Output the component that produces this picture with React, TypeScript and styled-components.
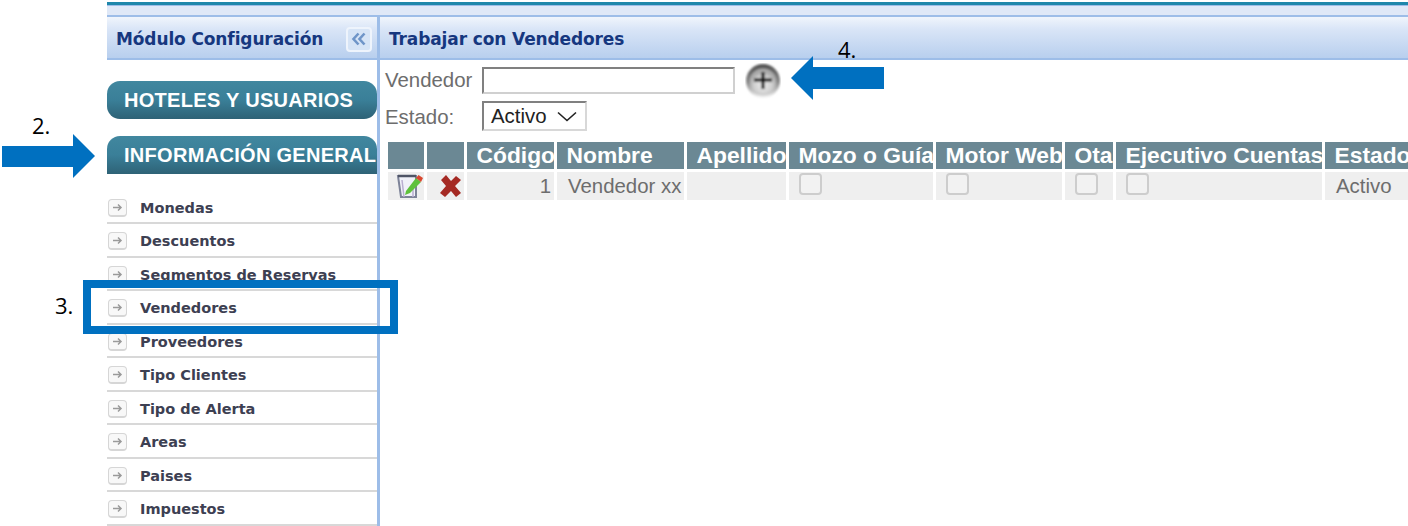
import styled, { createGlobalStyle } from 'styled-components'

const GlobalStyle = createGlobalStyle`
  html, body {
    margin: 0;
    padding: 0;
    background: #fff;
  }
`;

const Page = styled.div`
  position: relative;
  width: 1408px;
  height: 526px;
  overflow: hidden;
  background: #fff;
  padding: 2px 0 0 107px;
  box-sizing: border-box;
  font-family: "Liberation Sans", Arial, sans-serif;
`;

const TopStrip = styled.div`
  height: 13px;
  box-sizing: border-box;
  background: #dfe8f7;
  border-top: 3px solid #1f87ab;
  box-shadow: inset 0 1px 0 #9dbde8;
`;

const Columns = styled.div`
  display: flex;
  border-top: 2px solid #9dbde8;
  height: 509px;
`;

const Sidebar = styled.aside`
  width: 273px;
  flex: none;
  box-sizing: border-box;
  border-right: 3px solid #9dbde8;
`;

const Main = styled.main`
  flex: 1;
  min-width: 0;
`;

const PanelHeader = styled.div`
  height: 43px;
  box-sizing: border-box;
  display: flex;
  align-items: center;
  justify-content: space-between;
  padding: 3px 5px 0 ${p => p.$left}px;
  background: linear-gradient(#f0f5fc, #d9e5f7 30%, #b8cfee);
  border-bottom: 2px solid #9dbde8;
`;

const PanelTitle = styled.h1`
  margin: 0;
  font-family: "DejaVu Sans", Verdana, sans-serif;
  font-size: 17px;
  font-weight: 700;
  letter-spacing: -0.12px;
  color: #16377f;
  white-space: nowrap;
`;

const CollapseButton = styled.div`
  width: 26px;
  height: 25px;
  box-sizing: border-box;
  display: flex;
  align-items: center;
  justify-content: center;
  border: 2px solid #eef4fc;
  border-radius: 4px;
  background: #d6e4f6;
`;

const SectionButton = styled.div`
  height: 38px;
  box-sizing: border-box;
  padding-left: 17px;
  margin-top: ${p => p.$top}px;
  display: flex;
  align-items: center;
  overflow: hidden;
  white-space: nowrap;
  color: #fff;
  font-size: 20px;
  font-weight: 700;
  letter-spacing: 0.3px;
  background: linear-gradient(#41879f, #3a7f98 50%, #2e6276);
  border-radius: ${p => (p.$open ? '13px 13px 0 0' : '13px')};
`;

const Menu = styled.ul`
  list-style: none;
  margin: 16.5px 0 0;
  padding: 0;
`;

const MenuItem = styled.li`
  height: 33.5px;
  box-sizing: border-box;
  display: flex;
  align-items: center;
  gap: 13px;
  padding: 3px 0 0 1px;
  border-bottom: 2px solid #d8d8d8;
  font-family: "DejaVu Sans", Verdana, sans-serif;
  font-size: 14.5px;
  font-weight: 700;
  color: #3d4052;
`;

const ArrowBox = styled.span`
  width: 19px;
  height: 18px;
  box-sizing: border-box;
  flex: none;
  display: flex;
  align-items: center;
  justify-content: center;
  border: 1.5px solid #d6d6d6;
  border-bottom-width: 2px;
  border-radius: 4px;
  background: #f8f8f8;
`;

const FormRow = styled.div`
  display: flex;
  align-items: center;
  height: ${p => p.$height}px;
  padding-left: 5px;
`;

const FieldLabel = styled.label`
  width: 97px;
  flex: none;
  font-size: 20.4px;
  color: #6d6d6d;
  padding-top: ${p => p.$drop || 0}px;
`;

const TextBox = styled.div`
  width: 253px;
  height: 27px;
  box-sizing: border-box;
  border: 2px solid;
  border-color: #808080 #d0d0d0 #d0d0d0 #808080;
  background: #fff;
`;

const AddButton = styled.div`
  width: 36px;
  height: 36px;
  margin-left: 10px;
  flex: none;
`;

const SelectBox = styled.div`
  width: 105px;
  height: 30px;
  box-sizing: border-box;
  padding: 1px 8px 0 7px;
  display: flex;
  align-items: center;
  justify-content: space-between;
  border: 2px solid;
  border-color: #808080 #d8d8d8 #d8d8d8 #808080;
  font-size: 20.4px;
  color: #222;
`;

const Grid = styled.table`
  table-layout: fixed;
  width: 1023px;
  margin: 11px 0 0 8px;
  border-collapse: separate;
  border-spacing: 0;
`;

const Col = styled.col`
  width: ${p => p.$w + p.$gap}px;
`;

const HeadCell = styled.th`
  height: 27px;
  padding: 0 0 0 9.5px;
  box-sizing: border-box;
  border-right: 3px solid #fff;
  background: #6b8894;
  background-clip: padding-box;
  color: #fff;
  font-size: 22.8px;
  font-weight: 700;
  text-align: left;
  white-space: nowrap;
  overflow: hidden;
`;

const BodyCell = styled.td`
  height: 31px;
  padding: 3px ${p => (p.$right ? '3px' : '0')} 0 ${p => (p.$right ? '0' : '11px')};
  box-sizing: border-box;
  border-right: 3px solid #fff;
  background: #efefef;
  background-clip: padding-box;
  font-size: 20.4px;
  color: #6d6d6d;
  text-align: ${p => (p.$right ? 'right' : 'left')};
  white-space: nowrap;
  overflow: hidden;
  position: relative;
  &::before {
    content: '';
    position: absolute;
    left: 0;
    right: 0;
    top: 0;
    height: 3px;
    background: #fff;
  }
`;

const IconCell = styled(BodyCell)`
  padding: 3px 0 0 ${p => p.$indent}px;
  text-align: left;
  line-height: 0;
`;

const CheckCell = styled(BodyCell)`
  padding: 0 0 2px 10px;
  vertical-align: middle;
`;

const CheckBox = styled.span`
  display: block;
  width: 23px;
  height: 22px;
  box-sizing: border-box;
  border: 2px solid #cdcdcd;
  border-radius: 4px;
  background: #f2f2f2;
`;

const StepNumber = styled.span`
  position: absolute;
  left: ${p => p.$x}px;
  top: ${p => p.$y}px;
  font-family: "Open Sans", "Noto Sans", sans-serif;
  font-size: 22px;
  line-height: 22px;
  color: #000;
`;

const Callout = styled.svg`
  position: absolute;
  left: ${p => p.$x}px;
  top: ${p => p.$y}px;
`;

const Highlight = styled.div`
  position: absolute;
  left: 83px;
  top: 280px;
  width: 315px;
  height: 54px;
  box-sizing: border-box;
  border: 8px solid #0070c0;
`;

const menuItems = [
  'Monedas',
  'Descuentos',
  'Segmentos de Reservas',
  'Vendedores',
  'Proveedores',
  'Tipo Clientes',
  'Tipo de Alerta',
  'Areas',
  'Paises',
  'Impuestos',
]

const columns = [
  { w: 36, label: '' },
  { w: 37, label: '' },
  { w: 87, label: 'Código' },
  { w: 127, label: 'Nombre' },
  { w: 99, label: 'Apellido' },
  { w: 144, label: 'Mozo o Guía' },
  { w: 126, label: 'Motor Web' },
  { w: 48, label: 'Ota' },
  { w: 206, label: 'Ejecutivo Cuentas' },
  { w: 83, label: 'Estado' },
]

function App() {
  return (
    <Page>
      <GlobalStyle />
      <TopStrip />
      <Columns>
        <Sidebar>
          <PanelHeader $left={9}>
            <PanelTitle>Módulo Configuración</PanelTitle>
            <CollapseButton>
              <svg width="16" height="14" viewBox="0 0 16 14" fill="none" stroke="#6f95c8" strokeWidth="2.6">
                <path d="M7.500 1.500 2.500 7l5 5.500M13.500 1.500 8.500 7l5 5.500" />
              </svg>
            </CollapseButton>
          </PanelHeader>
          <SectionButton $top={21}>HOTELES Y USUARIOS</SectionButton>
          <SectionButton $top={17} $open>INFORMACIÓN GENERAL</SectionButton>
          <Menu>
            {menuItems.map(item => (
              <MenuItem key={item}>
                <ArrowBox>
                  <svg width="11" height="9" viewBox="0 0 11 9" fill="none" stroke="#9a9a9a" strokeWidth="1.5">
                    <path d="M1 4.500h8M6 1.500l3 3-3 3" />
                  </svg>
                </ArrowBox>
                {item}
              </MenuItem>
            ))}
          </Menu>
        </Sidebar>
        <Main>
          <PanelHeader $left={9}>
            <PanelTitle>Trabajar con Vendedores</PanelTitle>
          </PanelHeader>
          <FormRow $height={41}>
            <FieldLabel>Vendedor</FieldLabel>
            <TextBox />
            <AddButton>
              <svg width="36" height="36" viewBox="0 0 36 36">
                <defs>
                  <linearGradient id="addRim" x1="0" y1="0" x2="0" y2="1">
                    <stop offset="0%" stopColor="#505050" />
                    <stop offset="55%" stopColor="#8a8a8a" />
                    <stop offset="100%" stopColor="#fafafa" />
                  </linearGradient>
                  <radialGradient id="addFill" cx="50%" cy="62%" r="50%">
                    <stop offset="0%" stopColor="#eeeeee" />
                    <stop offset="70%" stopColor="#cdcdcd" />
                    <stop offset="100%" stopColor="#a8a8a8" />
                  </radialGradient>
                  <filter id="addSoft">
                    <feGaussianBlur stdDeviation="1" />
                  </filter>
                </defs>
                <g filter="url(#addSoft)">
                  <circle cx="18" cy="18" r="17" fill="url(#addRim)" />
                  <circle cx="18" cy="19" r="13.500" fill="url(#addFill)" />
                  <path d="M18 9v17M9 17h18" stroke="#111" strokeWidth="3" />
                </g>
              </svg>
            </AddButton>
          </FormRow>
          <FormRow $height={30}>
            <FieldLabel $drop={2}>Estado:</FieldLabel>
            <SelectBox>
              Activo
              <svg width="20" height="11" viewBox="0 0 20 11" fill="none" stroke="#222" strokeWidth="1.6">
                <path d="M1 1.500 10 9.500 19 1.500" />
              </svg>
            </SelectBox>
          </FormRow>
          <Grid>
            <colgroup>
              {columns.map((c, i) => (
                <Col key={i} $w={c.w} $gap={3} />
              ))}
            </colgroup>
            <thead>
              <tr>
                {columns.map((c, i) => (
                  <HeadCell key={i}>{c.label}</HeadCell>
                ))}
              </tr>
            </thead>
            <tbody>
              <tr>
                <IconCell $indent={8}>
                  <svg width="28" height="28" viewBox="0 0 28 28">
                    <path d="M2 4h18v21H5z" fill="#f0f1f8" stroke="#7d8398" strokeWidth="2" />
                    <path d="M2 4h18" stroke="#4f5566" strokeWidth="2.500" />
                    <path d="M8 25 6 8M17 25V13" stroke="#b9aed0" strokeWidth="1.500" fill="none" />
                    <path d="M10 19 20 6l5 4-11 11-5 2z" fill="#5fc13c" />
                    <path d="M20 6l2.500-3L27 6l-2 4z" fill="#d9482f" />
                  </svg>
                </IconCell>
                <IconCell $indent={12}>
                  <svg width="24" height="24" viewBox="0 0 24 24">
                    <path d="M2 6 7 1l5 6 5-5 5 4-6 6 6 7-5 4-5-6-6 6-5-4 6-7z" fill="#a52a24" />
                  </svg>
                </IconCell>
                <BodyCell $right>1</BodyCell>
                <BodyCell>Vendedor xx</BodyCell>
                <BodyCell />
                <CheckCell><CheckBox /></CheckCell>
                <CheckCell><CheckBox /></CheckCell>
                <CheckCell><CheckBox /></CheckCell>
                <CheckCell><CheckBox /></CheckCell>
                <BodyCell>Activo</BodyCell>
              </tr>
            </tbody>
          </Grid>
        </Main>
      </Columns>

      <StepNumber $x={32} $y={114}>2.</StepNumber>
      <StepNumber $x={55} $y={294}>3.</StepNumber>
      <StepNumber $x={838} $y={38}>4.</StepNumber>
      <Callout $x={2} $y={134} width="93" height="44" viewBox="0 0 93 44">
        <path d="M0 12h71V0l22 22-22 22V33H0z" fill="#0070c0" />
      </Callout>
      <Callout $x={791} $y={56} width="93" height="44" viewBox="0 0 93 44">
        <path d="M93 11H22V0L0 22l22 22V33h71z" fill="#0070c0" />
      </Callout>
      <Highlight />
    </Page>
  )
}

export default App
